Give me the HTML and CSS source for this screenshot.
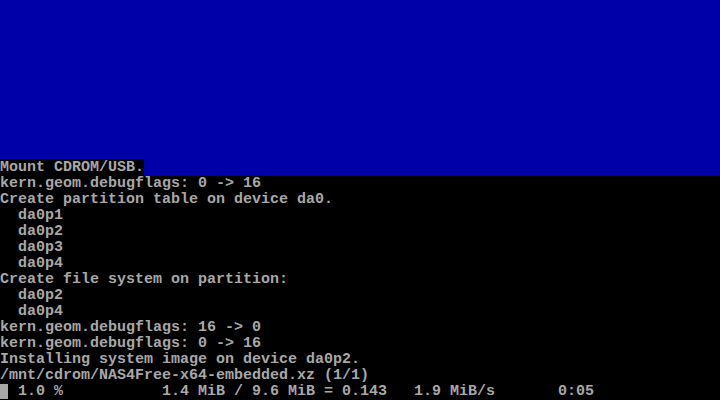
FILE: index.html
```html
<!DOCTYPE html>
<html>
<head>
<meta charset="utf-8">
<link rel="stylesheet" href="styles.css">
</head>
<body>
<div class="screen">
  <div class="dialog-area"></div>
  <div class="line blue"><span class="hl">Mount CDROM/USB.</span></div>
  <div class="line">kern.geom.debugflags: 0 -&gt; 16</div>
  <div class="line">Create partition table on device da0.</div>
  <div class="line">  da0p1</div>
  <div class="line">  da0p2</div>
  <div class="line">  da0p3</div>
  <div class="line">  da0p4</div>
  <div class="line">Create file system on partition:</div>
  <div class="line">  da0p2</div>
  <div class="line">  da0p4</div>
  <div class="line">kern.geom.debugflags: 16 -&gt; 0</div>
  <div class="line">kern.geom.debugflags: 0 -&gt; 16</div>
  <div class="line">Installing system image on device da0p2.</div>
  <div class="line">/mnt/cdrom/NAS4Free-x64-embedded.xz (1/1)</div>
  <div class="line"><span class="cursor"></span> 1.0 %           1.4 MiB / 9.6 MiB = 0.143   1.9 MiB/s       0:05</div>
</div>
</body>
</html>
```
FILE: styles.css
```css
html, body {
  margin: 0;
  padding: 0;
  background: #000;
}
.screen {
  width: 720px;
  height: 400px;
  overflow: hidden;
  background: #000;
  color: #a8a8a8;
  font-family: "Liberation Mono", "DejaVu Sans Mono", monospace;
  font-size: 15px;
  font-weight: bold;
}
.dialog-area {
  height: 160px;
  background: #0000a8;
}
.line {
  height: 16px;
  line-height: 16px;
  white-space: pre;
}
.blue {
  background: #0000a8;
}
.hl {
  background: #000;
}
.cursor {
  display: inline-block;
  width: 8px;
  height: 15px;
  background: #a8a8a8;
  vertical-align: -4px;
  margin-right: 1px;
}
```
